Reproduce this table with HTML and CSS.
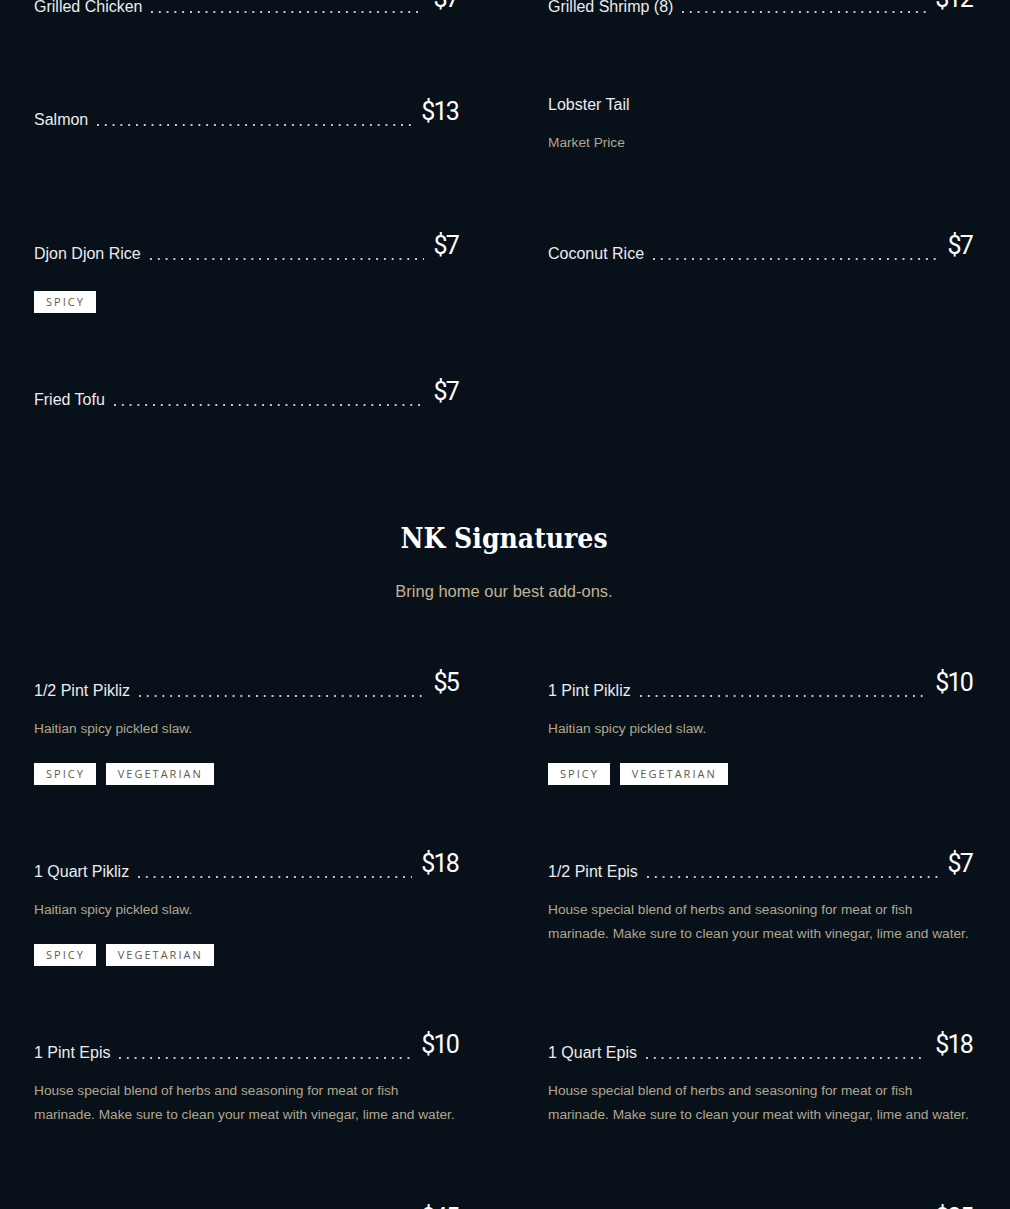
FILE: index.html
```html
<!DOCTYPE html>
<html lang="en">
<head>
<meta charset="utf-8">
<title>Menu</title>
<link rel="stylesheet" href="styles.css">
</head>
<body>
<main class="menu">
  <section class="section section-first">
    <div class="grid">
      <div class="item">
        <div class="head"><span class="name">Grilled Chicken</span><span class="leader"></span><span class="price">$7</span></div>
      </div>
      <div class="item">
        <div class="head"><span class="name">Grilled Shrimp (8)</span><span class="leader"></span><span class="price">$12</span></div>
      </div>
      <div class="item">
        <div class="head"><span class="name">Salmon</span><span class="leader"></span><span class="price">$13</span></div>
      </div>
      <div class="item">
        <div class="head"><span class="name">Lobster Tail</span></div>
        <p class="desc">Market Price</p>
      </div>
      <div class="item">
        <div class="head"><span class="name">Djon Djon Rice</span><span class="leader"></span><span class="price">$7</span></div>
        <div class="tags"><span class="tag">Spicy</span></div>
      </div>
      <div class="item">
        <div class="head"><span class="name">Coconut Rice</span><span class="leader"></span><span class="price">$7</span></div>
      </div>
      <div class="item">
        <div class="head"><span class="name">Fried Tofu</span><span class="leader"></span><span class="price">$7</span></div>
      </div>
    </div>
  </section>

  <section class="section">
    <header class="section-head">
      <h2 class="title">NK Signatures</h2>
      <p class="subtitle">Bring home our best add-ons.</p>
    </header>
    <div class="grid">
      <div class="item">
        <div class="head"><span class="name">1/2 Pint Pikliz</span><span class="leader"></span><span class="price">$5</span></div>
        <p class="desc">Haitian spicy pickled slaw.</p>
        <div class="tags"><span class="tag">Spicy</span><span class="tag">Vegetarian</span></div>
      </div>
      <div class="item">
        <div class="head"><span class="name">1 Pint Pikliz</span><span class="leader"></span><span class="price">$10</span></div>
        <p class="desc">Haitian spicy pickled slaw.</p>
        <div class="tags"><span class="tag">Spicy</span><span class="tag">Vegetarian</span></div>
      </div>
      <div class="item">
        <div class="head"><span class="name">1 Quart Pikliz</span><span class="leader"></span><span class="price">$18</span></div>
        <p class="desc">Haitian spicy pickled slaw.</p>
        <div class="tags"><span class="tag">Spicy</span><span class="tag">Vegetarian</span></div>
      </div>
      <div class="item">
        <div class="head"><span class="name">1/2 Pint Epis</span><span class="leader"></span><span class="price">$7</span></div>
        <p class="desc">House special blend of herbs and seasoning for meat or fish marinade. Make sure to clean your meat with vinegar, lime and water.</p>
      </div>
      <div class="item">
        <div class="head"><span class="name">1 Pint Epis</span><span class="leader"></span><span class="price">$10</span></div>
        <p class="desc">House special blend of herbs and seasoning for meat or fish marinade. Make sure to clean your meat with vinegar, lime and water.</p>
      </div>
      <div class="item">
        <div class="head"><span class="name">1 Quart Epis</span><span class="leader"></span><span class="price">$18</span></div>
        <p class="desc">House special blend of herbs and seasoning for meat or fish marinade. Make sure to clean your meat with vinegar, lime and water.</p>
      </div>
      <div class="item">
        <div class="head"><span class="name">1 Gallon Epis</span><span class="leader"></span><span class="price">$45</span></div>
        <p class="desc">House special blend of herbs and seasoning for meat or fish marinade.</p>
      </div>
      <div class="item">
        <div class="head"><span class="name">Epis Sampler</span><span class="leader"></span><span class="price">$25</span></div>
        <p class="desc">House special blend of herbs and seasoning for meat or fish marinade.</p>
      </div>
    </div>
  </section>
</main>
</body>
</html>
```
FILE: styles.css
```css
html, body {
  margin: 0;
  padding: 0;
  background: #08101a;
}

body {
  font-family: "Liberation Sans", Arial, sans-serif;
  color: #ececec;
}

.menu {
  padding: 0 36px 0 34px;
  margin-top: -19px;
}

.grid {
  display: grid;
  grid-template-columns: 426px 426px;
  column-gap: 88px;
  row-gap: 61px;
  align-items: start;
}

.item {
  display: flex;
  flex-direction: column;
}

.head {
  display: flex;
  align-items: flex-end;
  margin-bottom: 15px;
}

.name {
  font-size: 16px;
  line-height: 22px;
  color: #ececec;
  white-space: nowrap;
}

.leader {
  flex: 1;
  height: 2px;
  margin: 0 9px 5px 9px;
  background-image: radial-gradient(circle at 1px 1px, rgba(230, 230, 230, 0.85) 0.9px, transparent 1.3px);
  background-size: 7.8px 2px;
  background-repeat: repeat-x;
}

.price {
  font-family: "Roboto", sans-serif;
  font-size: 25px;
  line-height: 36px;
  letter-spacing: -1.8px;
  padding: 0 2px 1px 0;
  color: #ffffff;
  white-space: nowrap;
}

.desc {
  margin: 0 0 12px 0;
  font-size: 13.7px;
  line-height: 24px;
  color: #b1a78e;
}

.tags {
  display: flex;
  gap: 10px;
}

.desc + .tags {
  margin-top: 10px;
}

.head + .tags {
  margin-top: 11px;
}

.tag {
  background: #ffffff;
  color: #5f594f;
  font-family: "Open Sans", sans-serif;
  font-size: 11px;
  line-height: 14px;
  letter-spacing: 2px;
  text-transform: uppercase;
  padding: 4px 11px 4px 12px;
}

.section-head {
  text-align: center;
  margin-top: 95px;
  margin-bottom: 62px;
}

.title {
  margin: 0;
  font-family: "DejaVu Serif Condensed", "DejaVu Serif", serif;
  font-weight: bold;
  font-size: 28px;
  line-height: 36px;
  color: #ffffff;
}

.subtitle {
  margin: 22px 0 0 0;
  font-size: 16.5px;
  line-height: 24px;
  color: #c2b391;
}
```
